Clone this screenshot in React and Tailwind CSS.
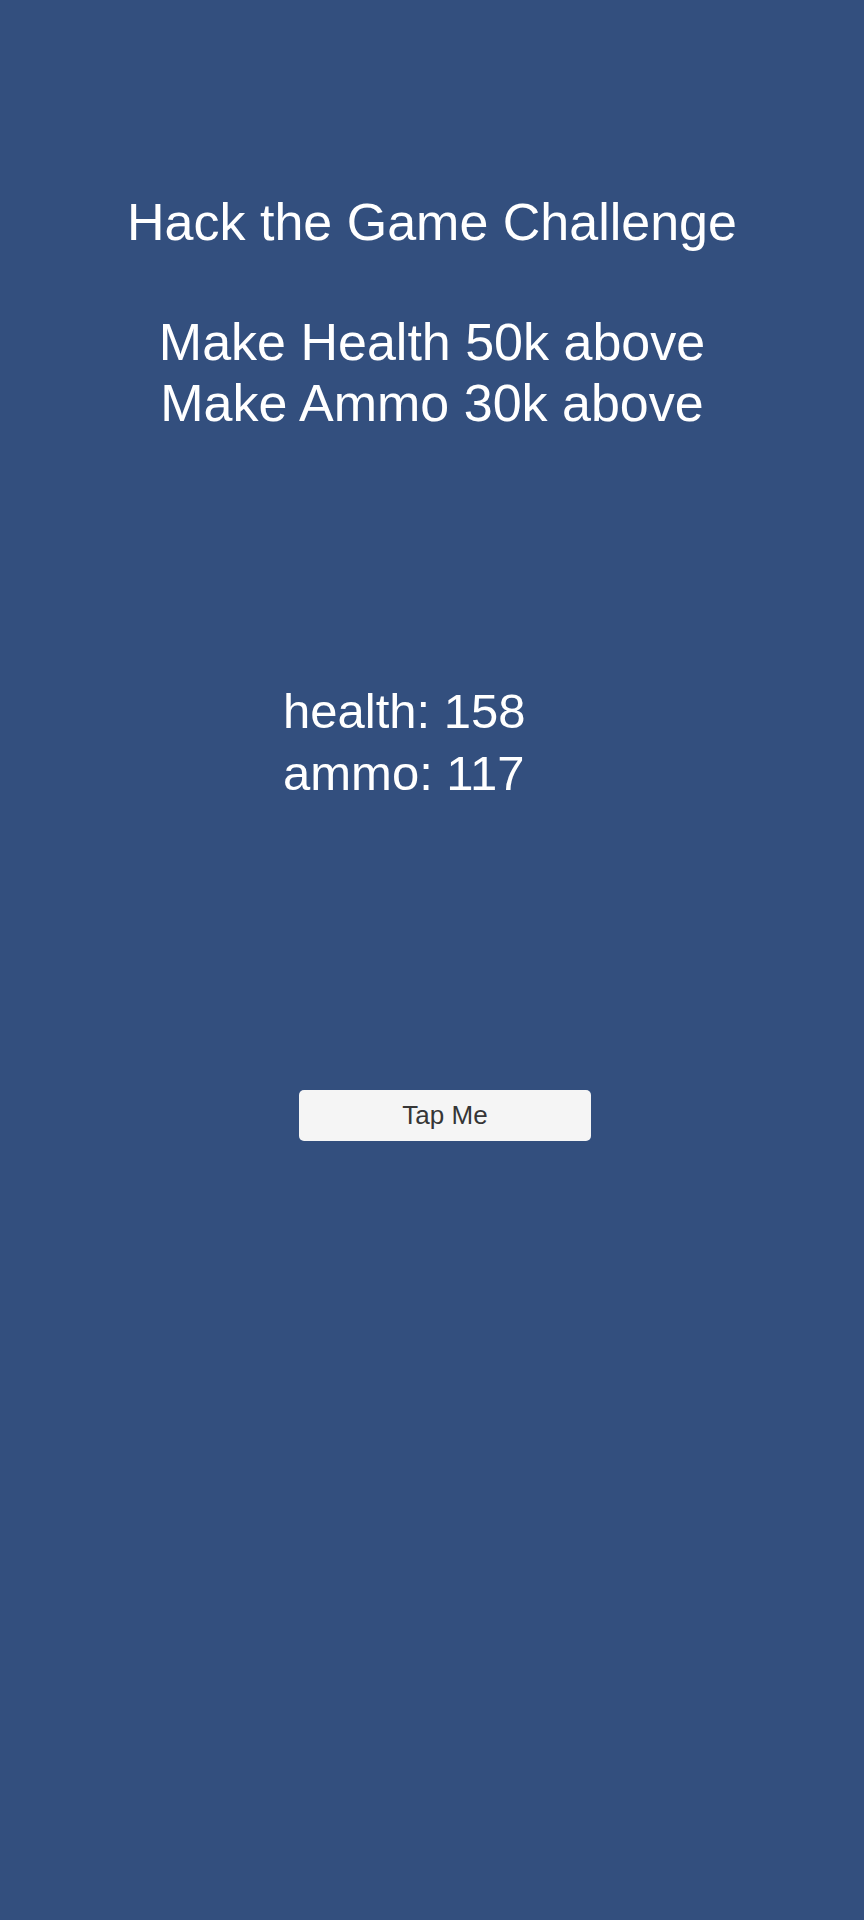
export default function App() {
  return (
    <div
      className="w-full h-[1920px] bg-[#334f7e] text-white"
      style={{ fontFamily: '"Liberation Sans", Arial, sans-serif' }}
    >
      <div className="pt-[192px] text-center text-[52px] leading-[60px]">
        <p>Hack the Game Challenge</p>
        <p>&nbsp;</p>
        <p>Make Health 50k above</p>
        <p className="mt-[1px]">Make Ammo 30k above</p>
      </div>

      <div className="mt-[247px] ml-[283px] text-[49px] leading-[62px]">
        <p>health: 158</p>
        <p>ammo: 117</p>
      </div>

      <div className="mt-[286px] ml-[299px]">
        <button className="w-[292px] h-[51px] rounded-[5px] bg-[#f5f5f5] text-[#363636] text-[26px] flex items-center justify-center">
          Tap Me
        </button>
      </div>
    </div>
  );
}
